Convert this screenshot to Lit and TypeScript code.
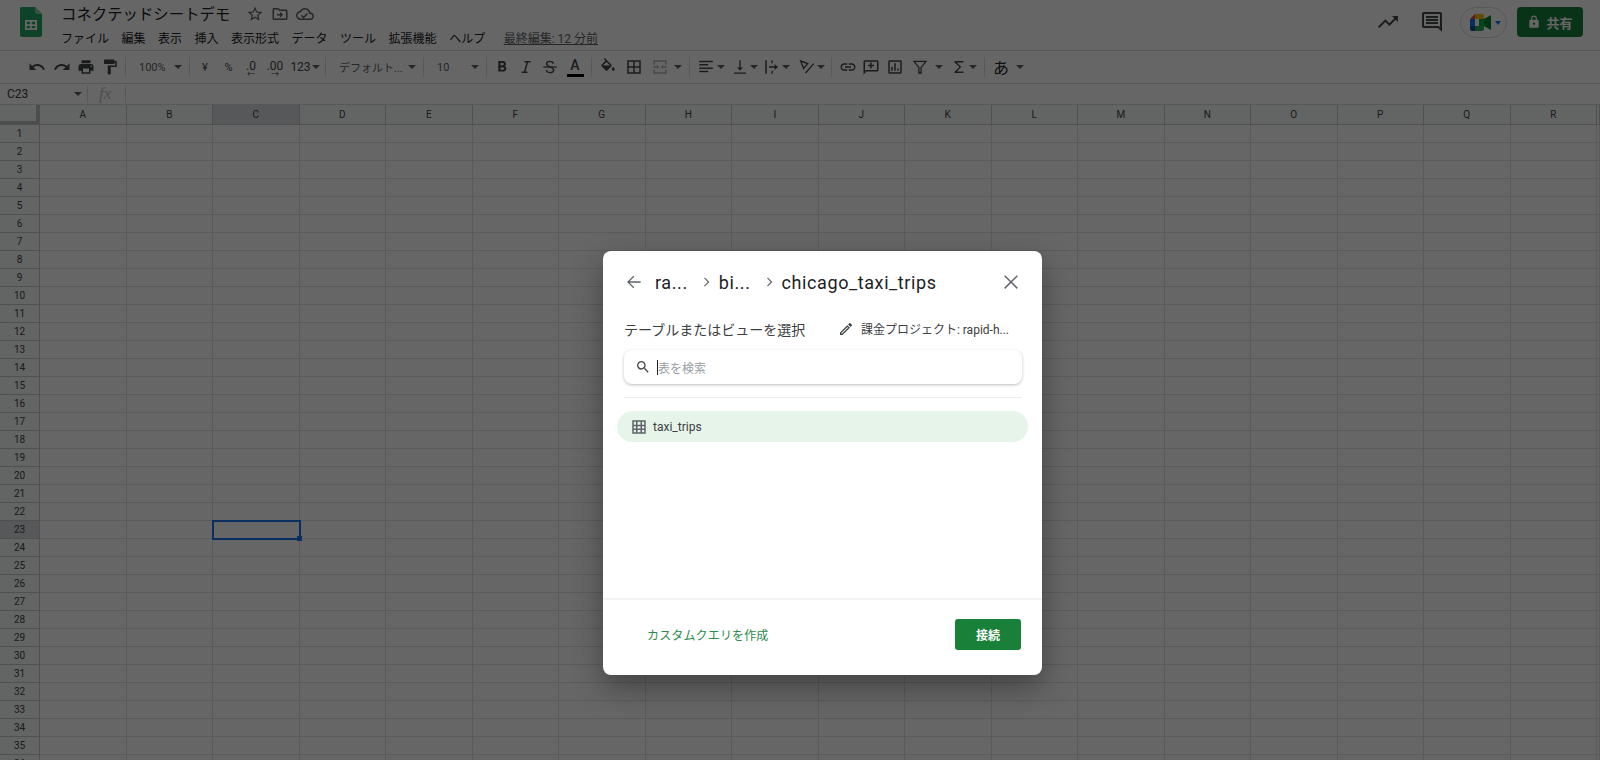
import { LitElement, html, css, svg } from "lit";
import { customElement } from "lit/decorators.js";

const st = (d: string, w = 1.7) => svg`<path d=${d} fill="none" stroke="currentColor" stroke-width=${w}/>`;
const P: Record<string, any> = {
  undo: svg`<path d="M12.500 8c-2.650 0-5.050.99-6.900 2.600L2 7v9h9l-3.620-3.620c1.390-1.160 3.160-1.880 5.120-1.880 3.540 0 6.550 2.310 7.600 5.500l2.370-.78C21.080 11.030 17.150 8 12.500 8z"/>`,
  redo: svg`<path d="M18.400 10.600C16.550 8.990 14.150 8 11.500 8c-4.650 0-8.580 3.030-9.960 7.220L3.900 16c1.050-3.190 4.050-5.500 7.600-5.500 1.950 0 3.730.72 5.120 1.880L13 16h9V7l-3.600 3.600z"/>`,
  print: svg`<path d="M19 8H5c-1.660 0-3 1.340-3 3v6h4v4h12v-4h4v-6c0-1.660-1.340-3-3-3zm-3 11H8v-5h8v5zm3-7c-.55 0-1-.45-1-1s.45-1 1-1 1 .45 1 1-.45 1-1 1zm-1-9H6v4h12V3z"/>`,
  paint: svg`<path d="M18 4V3c0-.55-.45-1-1-1H5c-.55 0-1 .45-1 1v4c0 .55.45 1 1 1h12c.55 0 1-.45 1-1V6h1v4H9v11c0 .55.45 1 1 1h2c.55 0 1-.45 1-1v-9h8V4h-3z"/>`,
  bold: svg`<path d="M15.600 10.790c.97-.67 1.650-1.770 1.650-2.790 0-2.260-1.750-4-4-4H7v14h7.040c2.090 0 3.710-1.700 3.710-3.790 0-1.520-.86-2.820-2.150-3.420zM10 6.500h3c.83 0 1.500.67 1.500 1.500s-.67 1.500-1.500 1.500h-3v-3zm3.500 9H10v-3h3.500c.83 0 1.500.67 1.500 1.500s-.67 1.500-1.500 1.500z"/>`,
  italic: st("M10 5h8M6 19h8M14 5l-4 14", 2),
  strike: svg`${st("M16.500 7.500C16 5.500 14 4.500 12 4.500c-2.500 0-4.500 1.300-4.500 3.300 0 4.700 9.300 3.500 9.300 8.200 0 2.200-2.300 3.500-4.800 3.500-2.300 0-4.400-1.200-5-3.300", 1.900)}<path d="M3 11.200h18v1.700H3z"/>`,
  fill: svg`<path d="M16.560 8.940L7.620 0 6.210 1.410l2.380 2.380-5.150 5.150c-.59.59-.59 1.540 0 2.120l5.500 5.500c.29.29.68.44 1.060.44s.77-.15 1.060-.44l5.500-5.500c.59-.58.59-1.530 0-2.120zM5.210 10L10 5.210 14.790 10H5.210zM19 11.500s-2 2.170-2 3.500c0 1.100.9 2 2 2s2-.9 2-2c0-1.330-2-3.500-2-3.500z"/>`,
  border: svg`<path d="M3 3v18h18V3H3zm8 16H5v-6h6v6zm0-8H5V5h6v6zm8 8h-6v-6h6v6zm0-8h-6V5h6v6z"/>`,
  merge: svg`<path opacity=".4" d="M3 3h18v6h-2V5H5v4H3V3zm0 12h2v4h14v-4h2v6H3v-6zm0-4h5V9l3 3-3 3v-2H3v-2zm18 2h-5v2l-3-3 3-3v2h5v2z"/>`,
  align: svg`<path d="M3 3.500h18v2H3zm0 4.500h12v2H3zm0 4.500h18v2H3zm0 4.500h12v2H3z"/><path d="M3 20h18v1.500H3z" opacity="0"/>`,
  valign: svg`<path d="M4 19.300h16V21H4zM11.100 3h1.800v9.500H16l-4 4.300-4-4.300h3.100z"/>`,
  wrap: svg`<path d="M3 3h2v18H3zM11.200 3H13v4h-1.800zm0 14H13v4h-1.800zM8 11.100h7.500V8l4.500 4-4.500 4v-3.100H8z"/>`,
  rotate: svg`${st("M3.500 4l9.500 3.500-5.500 6.500zM21 7.500L10 20", 1.800)}`,
  link: svg`<path d="M3.900 12c0-1.710 1.390-3.100 3.100-3.100h4V7H7c-2.760 0-5 2.240-5 5s2.240 5 5 5h4v-1.900H7c-1.710 0-3.100-1.390-3.100-3.100zM8 13h8v-2H8v2zm9-6h-4v1.900h4c1.710 0 3.100 1.390 3.100 3.100s-1.390 3.100-3.100 3.100h-4V17h4c2.760 0 5-2.240 5-5s-2.240-5-5-5z"/>`,
  addc: svg`<path d="M20 3H4c-1.100 0-2 .9-2 2v17l4-4h14c1.100 0 2-.9 2-2V5c0-1.100-.9-2-2-2zm0 13H5.200L4 17.200V5h16v11zm-9-2h2v-3h3V9h-3V6h-2v3H8v2h3v3z"/>`,
  chart: svg`<path d="M19 3H5c-1.100 0-2 .9-2 2v14c0 1.100.9 2 2 2h14c1.100 0 2-.9 2-2V5c0-1.100-.9-2-2-2zm0 16H5V5h14v14zM7 12h2v5H7zm4-5h2v10h-2zm4 7h2v3h-2z"/>`,
  filter: st("M4 4.500h16l-6.500 8v7.500h-3v-7.500z", 1.700),
  sigma: svg`<path d="M18 4H6v1.600l6.500 6.400L6 18.400V20h12v-2H9l6-6-6-6h9z"/>`,
  star: svg`<path d="M22 9.240l-7.190-.62L12 2 9.190 8.630 2 9.240l5.460 4.730L5.820 21 12 17.270 18.180 21l-1.630-7.030L22 9.240zM12 15.400l-3.760 2.270 1-4.280-3.320-2.880 4.380-.38L12 6.100l1.710 4.040 4.380.38-3.320 2.880 1 4.280L12 15.400z"/>`,
  move: svg`<path d="M20 6h-8l-2-2H4c-1.100 0-2 .9-2 2v12c0 1.100.9 2 2 2h16c1.100 0 2-.9 2-2V8c0-1.100-.9-2-2-2zm0 12H4V6h5.170l2 2H20v10zm-8-1l4-4-4-4v3H8v2h4v3z"/>`,
  cloud: svg`<path d="M19.350 10.040C18.670 6.590 15.640 4 12 4 9.110 4 6.600 5.640 5.350 8.040 2.340 8.360 0 10.910 0 14c0 3.310 2.690 6 6 6h13c2.760 0 5-2.240 5-5 0-2.640-2.050-4.780-4.650-4.960zM19 18H6c-2.210 0-4-1.790-4-4s1.790-4 4-4h.71C7.370 7.690 9.490 6 12 6c3.040 0 5.500 2.460 5.500 5.500v.5H19c1.660 0 3 1.340 3 3s-1.340 3-3 3zM10 15.200l-2.100-2.100-1.400 1.400 3.500 3.500 6-6-1.400-1.400z"/>`,
  trend: svg`<path d="M16 6l2.290 2.290-4.880 4.880-4-4L2 16.590 3.410 18l6-6 4 4 6.300-6.290L22 12V6z"/>`,
  comment: svg`<path d="M21.990 4c0-1.100-.89-2-1.990-2H4c-1.100 0-2 .9-2 2v12c0 1.100.9 2 2 2h14l4 4-.01-18zM20 4v13.170L18.830 16H4V4h16zM6 12h12v2H6zm0-3h12v2H6zm0-3h12v2H6z"/>`,
  lock: svg`<path d="M18 8h-1V6c0-2.760-2.240-5-5-5S7 3.240 7 6v2H6c-1.100 0-2 .9-2 2v10c0 1.100.9 2 2 2h12c1.100 0 2-.9 2-2V10c0-1.100-.9-2-2-2zm-6 9c-1.100 0-2-.9-2-2s.9-2 2-2 2 .9 2 2-.9 2-2 2zm3.100-9H8.900V6c0-1.710 1.390-3.100 3.100-3.100s3.100 1.390 3.100 3.100v2z"/>`,
  back: svg`<path d="M20 11.200H6.800l5.500-5.600L11.200 4.500 3.700 12l7.500 7.500 1.100-1.100-5.500-5.600H20z"/>`,
  chev: svg`<path d="M9.400 16.900L14.300 12 9.400 7.100l1.100-1.100 6 6-6 6z"/>`,
  close: svg`<path d="M19.500 5.600L18.400 4.500 12 10.900 5.600 4.500 4.500 5.600 10.900 12l-6.400 6.400 1.100 1.100 6.400-6.400 6.400 6.400 1.100-1.100-6.400-6.400z"/>`,
  pencil: svg`<path d="M14.060 9.020l.92.92L5.920 19H5v-.92l9.060-9.060M17.660 3c-.25 0-.51.1-.7.29l-1.830 1.830 3.750 3.750 1.830-1.830c.39-.39.39-1.020 0-1.410l-2.340-2.340c-.2-.2-.45-.29-.71-.29zm-3.600 3.190L3 17.250V21h3.750L17.810 9.940l-3.750-3.750z"/>`,
  search: svg`<path d="M15.500 14h-.79l-.28-.27A6.470 6.470 0 0016 9.500 6.500 6.500 0 109.500 16c1.610 0 3.090-.59 4.230-1.570l.27.28v.79l5 4.990L20.490 19l-4.990-5zm-6 0C7.010 14 5 11.990 5 9.500S7.010 5 9.500 5 14 7.010 14 9.500 11.990 14 9.500 14z"/>`,
  table: svg`<path d="M3 3v18h18V3H3zm5 16H5v-3h3v3zm0-5H5v-3h3v3zm0-5H5V5h3v4zm6 10h-4v-3h4v3zm0-5h-4v-3h4v3zm0-5h-4V5h4v4zm5 10h-3v-3h3v3zm0-5h-3v-3h3v3zm0-5h-3V5h3v4z"/>`,
};

const ic = (n: string, cls = "i18") => html`<svg class=${cls} viewBox="0 0 24 24" fill="currentColor">${P[n]}</svg>`;
const arrow = html`<span class="arrow"></span>`;

type Item = { w: number; k: string; v?: string; gap?: number };
const TOOLS: Item[] = [
  { w: 24, k: "i", v: "undo" }, { w: 25, k: "i", v: "redo" }, { w: 24, k: "i", v: "print" }, { w: 24, k: "i", v: "paint" },
  { w: 7, k: "s" },
  { w: 57, k: "sel", v: "100%" },
  { w: 7, k: "s" },
  { w: 24, k: "t", v: "¥" }, { w: 23, k: "t", v: "%" }, { w: 22, k: "dec", v: ".0" }, { w: 26, k: "inc", v: ".00" }, { w: 34, k: "ta", v: "123" },
  { w: 7, k: "s" },
  { w: 91, k: "sel", v: "デフォルト..." },
  { w: 7, k: "s" },
  { w: 56, k: "sel", v: "10" },
  { w: 7, k: "s" },
  { w: 23, k: "i", v: "bold" }, { w: 25, k: "i", v: "italic" }, { w: 24, k: "i", v: "strike" }, { w: 26, k: "color" },
  { w: 7, k: "s" },
  { w: 26, k: "i", v: "fill" }, { w: 26, k: "i", v: "border" }, { w: 39, k: "ia", v: "merge", gap: 5 },
  { w: 7, k: "s" },
  { w: 36, k: "ia", v: "align", gap: 2 }, { w: 30, k: "ia", v: "valign" }, { w: 35, k: "ia", v: "wrap" }, { w: 34, k: "ia", v: "rotate" },
  { w: 7, k: "s" },
  { w: 26, k: "i", v: "link" }, { w: 20, k: "i", v: "addc" }, { w: 28, k: "i", v: "chart" }, { w: 36, k: "ia", v: "filter", gap: 6 }, { w: 36, k: "ia", v: "sigma", gap: 1 },
  { w: 7, k: "s" },
  { w: 40, k: "kana", v: "あ" },
];
const COLS = "ABCDEFGHIJKLMNOPQR".split("");
const ROWS = Array.from({ length: 36 }, (_, i) => i + 1);
const MENU = ["ファイル", "編集", "表示", "挿入", "表示形式", "データ", "ツール", "拡張機能", "ヘルプ"];

@customElement("app-root")
export class AppRoot extends LitElement {
  static styles = css`
    :host { display: block; position: relative; width: 1600px; height: 760px; overflow: hidden; background: #fff; font-family: Roboto, "Noto Sans CJK JP", sans-serif; color: #3c4043; }
    svg { display: block; flex: none; }
    .i18 { width: 18px; height: 18px; }
    .top { height: 50px; display: flex; border-bottom: 1px solid #dadce0; }
    .logo { width: 61px; flex: none; display: flex; padding: 7px 0 0 20px; box-sizing: border-box; }
    .doc { display: flex; flex-direction: column; flex: 1; padding-top: 3px; }
    .title { display: flex; align-items: center; height: 22px; font-size: 15.400px; color: #202124; line-height: 22px; }
    .title span { width: 185px; white-space: nowrap; position: relative; top: 1px; }
    .title svg { color: #5f6368; width: 18px; height: 18px; margin-right: 7px; }
    .menu { display: flex; height: 20px; margin-top: 2px; font-size: 12px; align-items: center; color: #202124; gap: 12.500px; white-space: nowrap; }
    .menu .last { margin-left: 6px; color: #5f6368; text-decoration: underline; font-size: 12px; }
    .right { display: flex; align-items: flex-start; padding: 7px 17px 0 0; }
    .right > svg { width: 24px; height: 24px; color: #444746; margin-top: 3px; }
    .right .tr { margin-right: 20px; }
    .right .cm { margin-right: 16px; }
    .pill { width: 47px; height: 31px; border: 1px solid #dadce0; border-radius: 16px; box-sizing: border-box; display: flex; align-items: center; padding-left: 9px; gap: 4px; margin-right: 10px; }
    .pill .arrow { border-top-color: #1a73e8; border-width: 4px 3.500px 0; }
    .share { width: 66px; height: 30px; background: #188038; border-radius: 4px; color: #fff; display: flex; align-items: center; justify-content: center; gap: 5px; font-size: 13px; font-weight: 700; }
    .share svg { width: 14px; height: 14px; }

    .tools { height: 32px; display: flex; align-items: center; padding-left: 25px; border-bottom: 1px solid #dadce0; color: #444746; }
    .c { display: flex; align-items: center; justify-content: center; height: 24px; flex: none; gap: 1px; box-sizing: border-box; position: relative; white-space: nowrap; }
    .s::after { content: ""; width: 1px; height: 20px; background: #dadce0; }
    .sel { justify-content: space-between; padding: 0 4px 0 10px; font-size: 11px; color: #5f6368; }
    .t { font-size: 11px; }
    .arrow { display: block; width: 0; height: 0; border-style: solid; border-width: 4px 4px 0; border-color: #5f6368 transparent transparent; flex: none; }
    .dec, .inc { font-size: 12px; }
    .dec i, .inc i { position: absolute; bottom: 0; font-style: normal; font-size: 8px; line-height: 8px; }
    .dec b, .inc b { font-weight: 400; position: relative; top: -1px; }
    .ta { font-size: 12px; }
    .color { flex-direction: column; gap: 0; font-size: 14px; font-weight: 500; line-height: 16px; }
    .color::after { content: ""; width: 17px; height: 3px; background: #000; margin-top: 1px; }
    .kana { font-size: 16px; color: #202124; gap: 7px; justify-content: flex-start; padding-left: 5px; }

    .fbar { height: 20px; display: flex; align-items: center; font-size: 12px; border-bottom: 1px solid #dadce0; }
    .ref { width: 88px; padding: 0 5px 0 7px; display: flex; justify-content: space-between; align-items: center; box-sizing: border-box; border-right: 1px solid #dadce0; height: 17px; }
    .fx { width: 38px; height: 17px; border-right: 1px solid #dadce0; box-sizing: border-box; font: italic 17px "Liberation Serif", serif; color: #bdc1c6; padding-left: 11px; line-height: 16px; }

    .grid { display: grid; grid-template-columns: 40px repeat(18, 86.500px) 1fr; grid-template-rows: 20px repeat(36, 18px); position: relative; }
    .h { border-right: 1px solid #c7c7c7; border-bottom: 1px solid #c7c7c7; background: #f8f9fa; font-size: 10px; color: #444; display: flex; align-items: center; justify-content: center; box-sizing: border-box; }
    .h.on { background: #dadce0; }
    .corner { border-right: 4px solid #c0c0c0; border-bottom: 4px solid #c0c0c0; }
    .cell { border-right: 1px solid #e2e3e3; border-bottom: 1px solid #e2e3e3; box-sizing: border-box; }
    .cell.on { outline: 2px solid #1a73e8; outline-offset: -1px; position: relative; z-index: 1; }
    .cell.on::after { content: ""; position: absolute; right: -3px; bottom: -3px; width: 5px; height: 5px; background: #1a73e8; }

    .scrim { position: absolute; inset: 0; background: rgba(0,0,0,.6); z-index: 2; }
    .modal { position: absolute; left: 603px; top: 251px; width: 439px; height: 424px; background: #fff; border-radius: 8px; z-index: 3; box-shadow: 0 12px 30px rgba(0,0,0,.35); display: flex; flex-direction: column; box-sizing: border-box; }
    .head { height: 62px; display: flex; align-items: center; padding: 0 20px 0 21px; color: #202124; font-size: 18px; flex: none; }
    .head svg { color: #5f6368; }
    .head > svg:first-child { width: 20px; height: 20px; }
    .head > svg:last-child { width: 22px; height: 22px; }
    .crumbs { display: flex; align-items: center; flex: 1; margin-left: 11px; white-space: nowrap; letter-spacing: .6px; }
    .crumbs svg { margin: 0 4px 0 9px; }
    .sub { display: flex; justify-content: space-between; align-items: center; padding: 0 33px 0 21px; height: 25px; margin-top: 3px; font-size: 14px; color: #3c4043; flex: none; }
    .bill { display: flex; align-items: center; gap: 7px; font-size: 12px; white-space: nowrap; }
    .bill svg { width: 16px; height: 16px; }
    .search { margin: 9px 20px 0 21px; height: 34px; border-radius: 8px; display: flex; align-items: center; padding-left: 11px; box-shadow: 0 1px 3px rgba(60,64,67,.35); font-size: 12px; color: #9aa0a6; flex: none; }
    .search svg { width: 16px; height: 16px; color: #444746; margin-right: 6px; }
    .caret { width: 1px; height: 15px; background: #202124; }
    .rule { height: 1px; margin: 13px 20px 0 21px; background: #eceded; flex: none; }
    .row { margin: 13px 14px 0 14px; height: 31px; border-radius: 15.500px; background: #e6f4ea; display: flex; align-items: center; padding-left: 13px; gap: 5px; font-size: 12px; color: #3c4043; flex: none; }
    .row svg { color: #5f6368; }
    .foot { margin-top: auto; height: 77px; border-top: 2px solid #f1f3f4; display: flex; align-items: center; justify-content: space-between; padding: 0 21px 6px 44px; box-sizing: border-box; flex: none; }
    .link { color: #2a8a4a; font-size: 12px; letter-spacing: .15px; }
    .btn { width: 66px; height: 31px; background: #188038; color: #fff; border-radius: 3px; display: flex; align-items: center; justify-content: center; font-size: 12px; font-weight: 700; }
  `;

  tool(t: Item) {
    const cl = `c ${t.k}`;
    const s = `width:${t.w}px${t.gap !== undefined ? `;gap:${t.gap}px` : ""}`;
    switch (t.k) {
      case "s": return html`<div class=${cl} style=${s}></div>`;
      case "i": return html`<div class=${cl} style=${s}>${ic(t.v!)}</div>`;
      case "ia": return html`<div class=${cl} style=${s}>${ic(t.v!)}${arrow}</div>`;
      case "sel": return html`<div class=${cl} style=${s}><span>${t.v}</span>${arrow}</div>`;
      case "t": return html`<div class=${cl} style=${s}>${t.v}</div>`;
      case "ta": return html`<div class=${cl} style=${s}>${t.v}${arrow}</div>`;
      case "dec": return html`<div class=${cl} style=${s}><b>${t.v}</b><i>←</i></div>`;
      case "inc": return html`<div class=${cl} style=${s}><b>${t.v}</b><i>→</i></div>`;
      case "color": return html`<div class=${cl} style=${s}>A</div>`;
      case "kana": return html`<div class=${cl} style=${s}>${t.v}${arrow}</div>`;
    }
    return null;
  }

  render() {
    return html`
      <div class="top">
        <div class="logo">
          <svg width="22" height="30" viewBox="0 0 22 30">
            <path d="M2 0h13l7 7v21a2 2 0 0 1-2 2H2a2 2 0 0 1-2-2V2a2 2 0 0 1 2-2z" fill="#23a566"/>
            <path d="M15 0l7 7h-5a2 2 0 0 1-2-2z" fill="#8ed1b1"/>
            <path d="M5 13h12v10H5zm1.800 1.800v2.400h3.300v-2.400zm5.100 0v2.400h3.300v-2.400zm-5.100 4.200v2.300h3.300V19zm5.100 0v2.300h3.300V19z" fill="#fff" fill-rule="evenodd"/>
          </svg>
        </div>
        <div class="doc">
          <div class="title"><span>コネクテッドシートデモ</span>${ic("star")}${ic("move")}${ic("cloud")}</div>
          <div class="menu">${MENU.map((m) => html`<div>${m}</div>`)}<div class="last">最終編集: 12 分前</div></div>
        </div>
        <div class="right">
          ${ic("trend", "tr")}${ic("comment", "cm")}
          <div class="pill">
            <svg width="21" height="17" viewBox="0 0 21 17">
              <path d="M0 5l5-5v5z" fill="#ea4335"/><path d="M5 0h7a2 2 0 0 1 2 2v3H5z" fill="#fbbc04"/><path d="M0 5h5v7H0z" fill="#1a73e8"/>
              <path d="M0 12h5v5H2a2 2 0 0 1-2-2z" fill="#174ea6"/><path d="M5 12h9v3a2 2 0 0 1-2 2H5z" fill="#34a853"/>
              <path d="M14 5l7-4v15l-7-4z" fill="#00832d"/><path d="M9 5h5v7H9z" fill="#00ac47"/>
            </svg>${arrow}
          </div>
          <div class="share">${ic("lock")}<span>共有</span></div>
        </div>
      </div>
      <div class="tools">${TOOLS.map((t) => this.tool(t))}</div>
      <div class="fbar"><div class="ref"><span>C23</span>${arrow}</div><div class="fx">fx</div></div>
      <div class="grid">
        <div class="h corner"></div>
        ${COLS.map((c) => html`<div class="h ${c === "C" ? "on" : ""}">${c}</div>`)}
        <div class="h"></div>
        ${ROWS.map((r) => html`
          <div class="h ${r === 23 ? "on" : ""}">${r}</div>
          ${COLS.map((c) => html`<div class="cell ${r === 23 && c === "C" ? "on" : ""}"></div>`)}
          <div class="cell"></div>
        `)}
      </div>
      <div class="scrim"></div>
      <div class="modal">
        <div class="head">
          ${ic("back")}
          <div class="crumbs"><span>ra...</span>${ic("chev")}<span>bi...</span>${ic("chev")}<span>chicago_taxi_trips</span></div>
          ${ic("close")}
        </div>
        <div class="sub"><span>テーブルまたはビューを選択</span><div class="bill">${ic("pencil")}<span>課金プロジェクト: rapid-h...</span></div></div>
        <div class="search">${ic("search")}<div class="caret"></div><span>表を検索</span></div>
        <div class="rule"></div>
        <div class="row">${ic("table")}<span>taxi_trips</span></div>
        <div class="foot"><span class="link">カスタムクエリを作成</span><div class="btn">接続</div></div>
      </div>
    `;
  }
}
